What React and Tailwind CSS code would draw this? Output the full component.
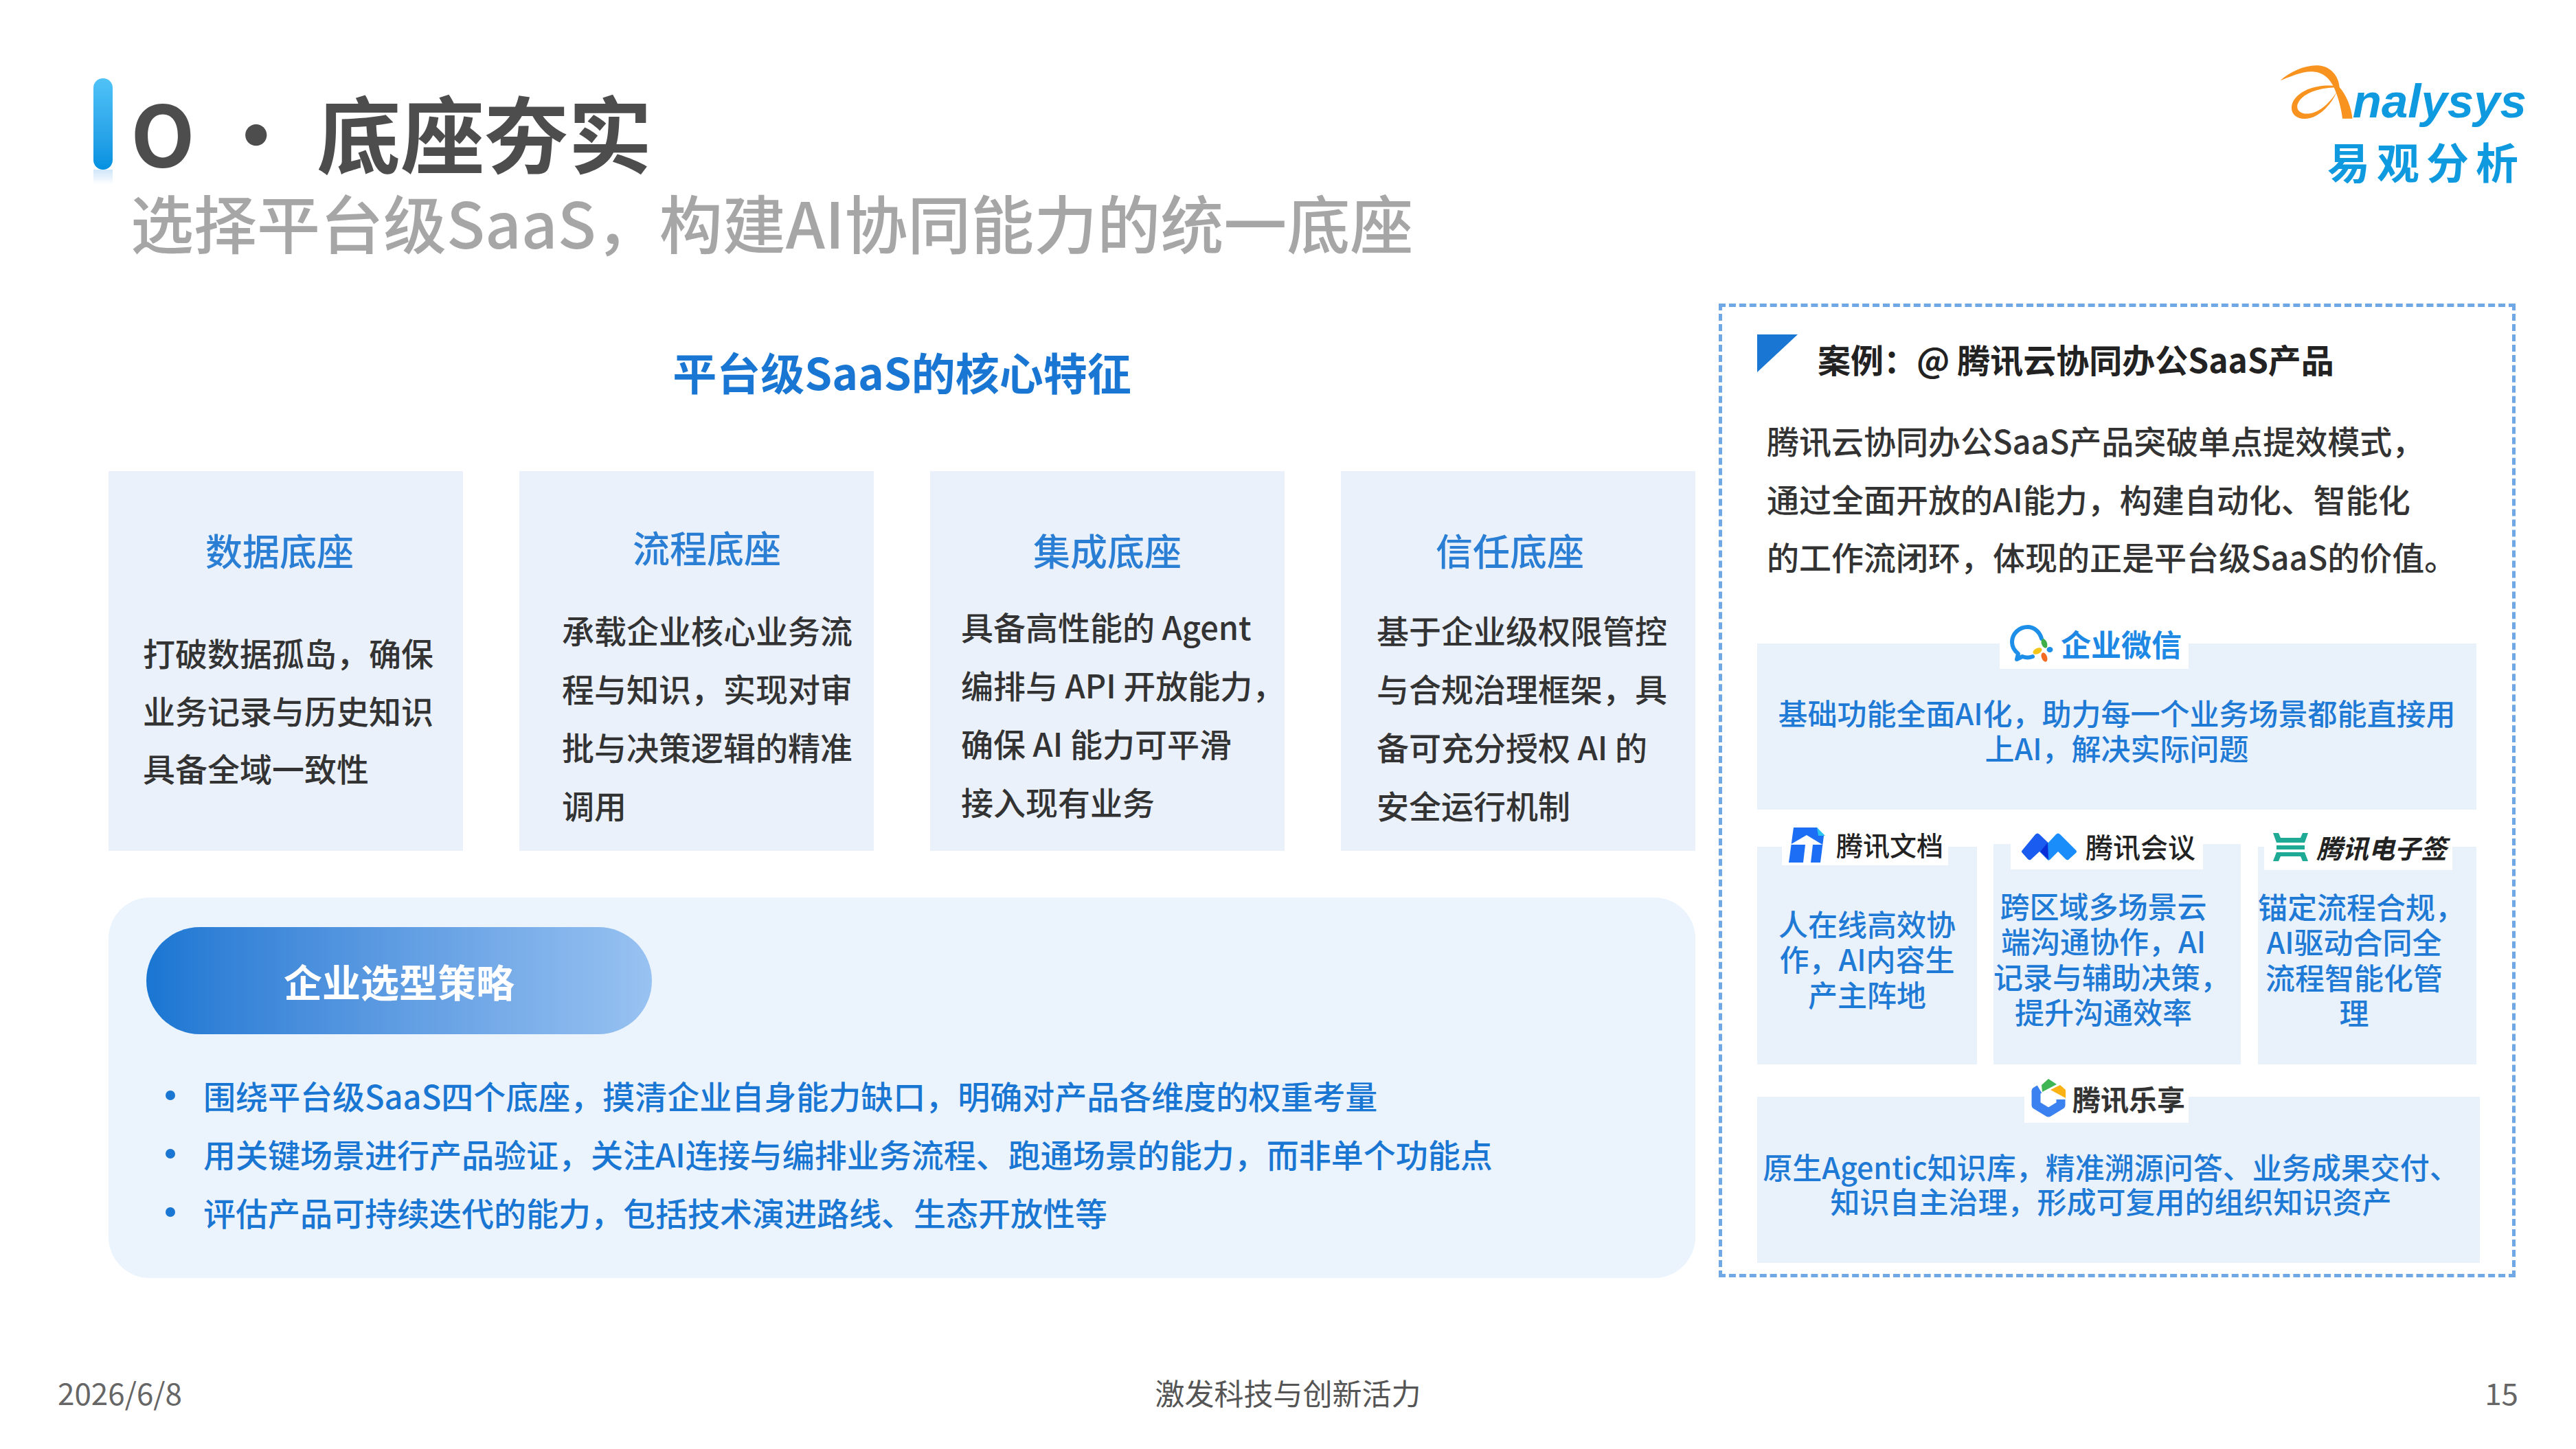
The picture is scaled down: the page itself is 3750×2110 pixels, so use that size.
import React from "react";

const cards = [
    {
        title: "数据底座",
        titleClass: "pt-[75px] pr-[18px]",
        bodyClass: "mt-[67px] pl-[50px] leading-[84px]",
        lines: ["打破数据孤岛，确保", "业务记录与历史知识", "具备全域一致性"],
    },
    {
        title: "流程底座",
        titleClass: "pt-[71px] pl-[30px]",
        bodyClass: "mt-[37px] pl-[62px] leading-[85px]",
        lines: ["承载企业核心业务流", "程与知识，实现对审", "批与决策逻辑的精准", "调用"],
    },
    {
        title: "集成底座",
        titleClass: "pt-[75px]",
        bodyClass: "mt-[28px] pl-[45px] leading-[85px]",
        lines: ["具备高性能的 Agent", "编排与 API 开放能力，", "确保 AI 能力可平滑", "接入现有业务"],
    },
    {
        title: "信任底座",
        titleClass: "pt-[75px] pr-[24px]",
        bodyClass: "mt-[33px] pl-[52px] leading-[85px]",
        lines: ["基于企业级权限管控", "与合规治理框架，具", "备可充分授权 AI 的", "安全运行机制"],
    },
];

const tips = [
    "围绕平台级SaaS四个底座，摸清企业自身能力缺口，明确对产品各维度的权重考量",
    "用关键场景进行产品验证，关注AI连接与编排业务流程、跑通场景的能力，而非单个功能点",
    "评估产品可持续迭代的能力，包括技术演进路线、生态开放性等",
];

const Lines = ({ lines }) =>
    lines.map((line) => (
        <div key={line} className="whitespace-nowrap">
            {line}
        </div>
    ));

const Swoosh = () => (
    <svg width="106" height="78" viewBox="205 75 314 232" className="shrink-0">
        <path
            fill="#f7931e"
            d="M205 142C250 100 320 72 370 76C430 80 460 130 462 170C490 200 515 260 518 306L475 306C470 260 455 210 440 175C420 130 390 105 350 103C300 100 250 125 205 142Z"
        />
        <path
            fill="#f7931e"
            d="M455 165C380 155 290 175 260 235C240 285 280 315 330 305C380 295 430 240 450 190C420 240 370 285 320 285C285 285 270 260 285 235C310 190 390 170 455 172Z"
        />
    </svg>
);

const WeComIcon = () => (
    <svg width="63" height="54" viewBox="0 0 63 54" className="shrink-0">
        <path
            d="M46 20C43 9 34 3 26 3C13 3 3 13 3 25C3 32 7 38 12 42L10 50L18 46C22 47.5 28 48 33 46"
            fill="none"
            stroke="#1d8fe8"
            strokeWidth="6"
            strokeLinecap="round"
            strokeLinejoin="round"
        />
        <ellipse cx="50" cy="27" rx="4" ry="7" fill="#3fae49" transform="rotate(-20 50 27)" />
        <ellipse cx="40" cy="38" rx="7" ry="4" fill="#f5c518" transform="rotate(-25 40 38)" />
        <ellipse cx="50" cy="47" rx="4" ry="7" fill="#f26b21" transform="rotate(-20 50 47)" />
        <ellipse cx="58" cy="36" rx="4.5" ry="4" fill="#1d8fe8" />
    </svg>
);

const DocsIcon = () => (
    <svg width="56" height="51" viewBox="0 0 56 51" className="shrink-0">
        <path fill="#1c6ff5" d="M8 0H42L52 12L47 51H1Z" />
        <path fill="#2bc4ee" d="M42 0L54 12H44Z" />
        <path fill="#fff" d="M27 11L50 25L36 25L33 51H22L25 25L3 25Z" />
    </svg>
);

const MeetingIcon = () => (
    <svg width="80" height="40" viewBox="0 0 80 40" className="shrink-0">
        <path fill="#1a5cf0" d="M20 2Q23 -1 26 2L52 27L39 40L26 27L13 39Q11 40 9 38L1 29Q-1 27 1 25Z" />
        <path fill="#1a8dfb" d="M50 2Q53 -1 56 2L79 25Q81 27 79 29L68 39Q66 40 64 38L53 27L41 39Q39 40 37 38L27 27Z" />
        <path fill="#0b2fd6" d="M38 14L27 27L38 38L39 38Z" />
    </svg>
);

const SignIcon = () => (
    <svg width="51" height="41" viewBox="0 0 51 41" className="shrink-0">
        <path fill="#1eaa94" d="M0 0H8L11 7H40L43 0H51L46 14H5Z" />
        <rect x="5" y="18" width="41" height="6" fill="#1eaa94" />
        <path fill="#1eaa94" d="M5 28H46L51 41H43L40 34H11L8 41H0Z" />
    </svg>
);

const LexiangIcon = () => (
    <svg width="51" height="56" viewBox="0 0 51 56" className="shrink-0">
        <path
            d="M12 15L7 18V38L25 49L43 38V30"
            fill="none"
            stroke="#3b82f0"
            strokeWidth="13"
            strokeLinejoin="round"
        />
        <path fill="#3fb554" d="M15 9L25 0L37 8L16 19Z" />
        <path fill="#fbb215" d="M28 16L42 9L50 16V28Z" />
    </svg>
);

const App = () => {
    return (
        <div className="flex h-[2110px] w-[3750px] flex-col overflow-hidden bg-white font-['Noto_Sans_CJK_SC','Noto_Sans',sans-serif]">
            <header className="flex h-[442px] shrink-0 items-start pl-[136px] pt-[95px]">
                <div className="mt-[19px] w-[28px] shrink-0">
                    <div className="h-[133px] rounded-full bg-gradient-to-b from-[#4fc3f7] to-[#0091e0]" />
                    <div className="h-[22px] bg-gradient-to-b from-[#cfe6fa] to-white" />
                </div>
                <div className="ml-[26px] mt-[20px]">
                    <div className="whitespace-nowrap text-[122px] font-bold leading-[150px] text-[#4d4d4d]">
                        O · 底座夯实
                    </div>
                    <div className="mt-[2px] whitespace-nowrap text-[92px] font-medium leading-[110px] text-[#a6a6a6]">
                        选择平台级SaaS，构建AI协同能力的统一底座
                    </div>
                </div>
                <div className="ml-auto mr-[72px] flex flex-col items-end">
                    <div className="flex h-[107px] items-start">
                        <Swoosh />
                        <div className="mt-[8px] font-['Liberation_Sans',sans-serif] text-[69px] font-bold italic leading-[90px] text-[#0f9ae0]">
                            nalysys
                        </div>
                    </div>
                    <div className="pr-[2px] text-[62px] font-bold leading-[64px] tracking-[10px] text-[#0f9ae0]">
                        易观分析
                    </div>
                </div>
            </header>

            <main className="flex shrink-0 items-start pl-[158px]">
                <div className="w-[2310px] shrink-0">
                    <h2 className="h-[244px] pt-[58px] text-center text-[64px] font-bold leading-[80px] text-[#1976d2]">
                        平台级SaaS的核心特征
                    </h2>
                    <div className="grid h-[553px] grid-cols-4 gap-x-[82px]">
                        {cards.map((card) => (
                            <div key={card.title} className="bg-[#eaf1fb]">
                                <div className={`text-center text-[54px] font-medium leading-[80px] text-[#2a7fd5] ${card.titleClass}`}>
                                    {card.title}
                                </div>
                                <div className={`text-[47px] font-medium text-[#333333] ${card.bodyClass}`}>
                                    <Lines lines={card.lines} />
                                </div>
                            </div>
                        ))}
                    </div>
                    <div className="mt-[68px] h-[554px] rounded-[60px] bg-[#ebf3fd] pl-[55px] pt-[43px]">
                        <div className="flex h-[156px] w-[736px] items-center justify-center rounded-full bg-gradient-to-r from-[#1976d2] to-[#98c2f1] text-[56px] font-bold text-white">
                            企业选型策略
                        </div>
                        <ul className="mt-[46px] pl-[28px] text-[47px] font-medium leading-[85px] text-[#1976d2]">
                            {tips.map((tip) => (
                                <li key={tip} className="flex items-center gap-x-[41px] whitespace-nowrap">
                                    <span className="h-[14px] w-[14px] shrink-0 rounded-full bg-[#1976d2]" />
                                    {tip}
                                </li>
                            ))}
                        </ul>
                    </div>
                </div>

                <aside className="ml-[34px] h-[1418px] w-[1160px] shrink-0 border-[5px] border-dashed border-[#6fa8e4] pl-[51px] pt-[40px]">
                    <div className="flex items-start">
                        <svg width="59" height="55" viewBox="0 0 59 55" className="shrink-0">
                            <path fill="#1976d2" d="M0 0H59L0 55Z" />
                        </svg>
                        <div className="ml-[29px] whitespace-nowrap text-[48px] font-bold leading-[70px] text-[#222222]">
                            案例：@ 腾讯云协同办公SaaS产品
                        </div>
                    </div>
                    <div className="ml-[14px] mt-[42px] text-[47px] font-medium leading-[84.5px] text-[#333333]">
                        <Lines
                            lines={[
                                "腾讯云协同办公SaaS产品突破单点提效模式，",
                                "通过全面开放的AI能力，构建自动化、智能化",
                                "的工作流闭环，体现的正是平台级SaaS的价值。",
                            ]}
                        />
                    </div>

                    <div className="relative mt-[84px] h-[242px] w-[1047px] bg-[#e9f1fb] pt-[75px] text-center text-[43px] font-medium leading-[51px] text-[#1f7ad6]">
                        <div className="absolute -top-[36px] left-[353px] flex h-[73px] w-[275px] items-center gap-x-[11px] bg-white pl-[15px]">
                            <WeComIcon />
                            <span className="text-[44px] font-bold text-[#1e88e5]">企业微信</span>
                        </div>
                        <Lines lines={["基础功能全面AI化，助力每一个业务场景都能直接用", "上AI，解决实际问题"]} />
                    </div>

                    <div className="mt-[50px] flex items-start text-center text-[43px] font-medium leading-[51.5px] text-[#1f7ad6]">
                        <div className="relative mt-[4px] h-[317px] w-[320px] shrink-0 bg-[#e9f1fb] pt-[86px]">
                            <div className="absolute -top-[32px] left-[36px] flex h-[59px] w-[242px] items-center gap-x-[14px] bg-white pl-[9px]">
                                <DocsIcon />
                                <span className="text-[39px] font-medium text-[#222222]">腾讯文档</span>
                            </div>
                            <Lines lines={["人在线高效协", "作，AI内容生", "产主阵地"]} />
                        </div>
                        <div className="relative ml-[24px] h-[321px] w-[360px] shrink-0 bg-[#e9f1fb] pr-[40px] pt-[64px]">
                            <div className="absolute -top-[28px] left-[25px] flex h-[65px] w-[280px] items-center gap-x-[13px] bg-white pl-[16px]">
                                <MeetingIcon />
                                <span className="text-[40px] font-medium text-[#222222]">腾讯会议</span>
                            </div>
                            <Lines lines={["跨区域多场景云", "端沟通协作，AI", "记录与辅助决策，", "提升沟通效率"]} />
                        </div>
                        <div className="relative ml-[25px] mt-[4px] h-[317px] w-[318px] shrink-0 bg-[#e9f1fb] pr-[38px] pt-[61px]">
                            <div className="absolute -top-[32px] left-[9px] flex h-[66px] w-[274px] items-center gap-x-[12px] bg-white pl-[13px]">
                                <SignIcon />
                                <span className="text-[38px] font-bold italic text-[#222222]">腾讯电子签</span>
                            </div>
                            <Lines lines={["锚定流程合规，", "AI驱动合同全", "流程智能化管", "理"]} />
                        </div>
                    </div>

                    <div className="relative mt-[47px] h-[242px] w-[1052px] bg-[#e9f1fb] pr-[22px] pt-[76px] text-center text-[43px] font-medium leading-[50px] text-[#1f7ad6]">
                        <div className="absolute -top-[34px] left-[389px] flex h-[72px] w-[239px] items-center gap-x-[9px] bg-white pl-[10px]">
                            <LexiangIcon />
                            <span className="text-[41px] font-bold text-[#333333]">腾讯乐享</span>
                        </div>
                        <Lines lines={["原生Agentic知识库，精准溯源问答、业务成果交付、", "知识自主治理，形成可复用的组织知识资产"]} />
                    </div>
                </aside>
            </main>

            <footer className="grid shrink-0 grid-cols-3 items-center px-[84px] pt-[136px] text-[44px] leading-[60px] text-[#666666]">
                <div>2026/6/8</div>
                <div className="text-center text-[43px] text-[#555555]">激发科技与创新活力</div>
                <div className="text-right">15</div>
            </footer>
        </div>
    );
};

export default App;
